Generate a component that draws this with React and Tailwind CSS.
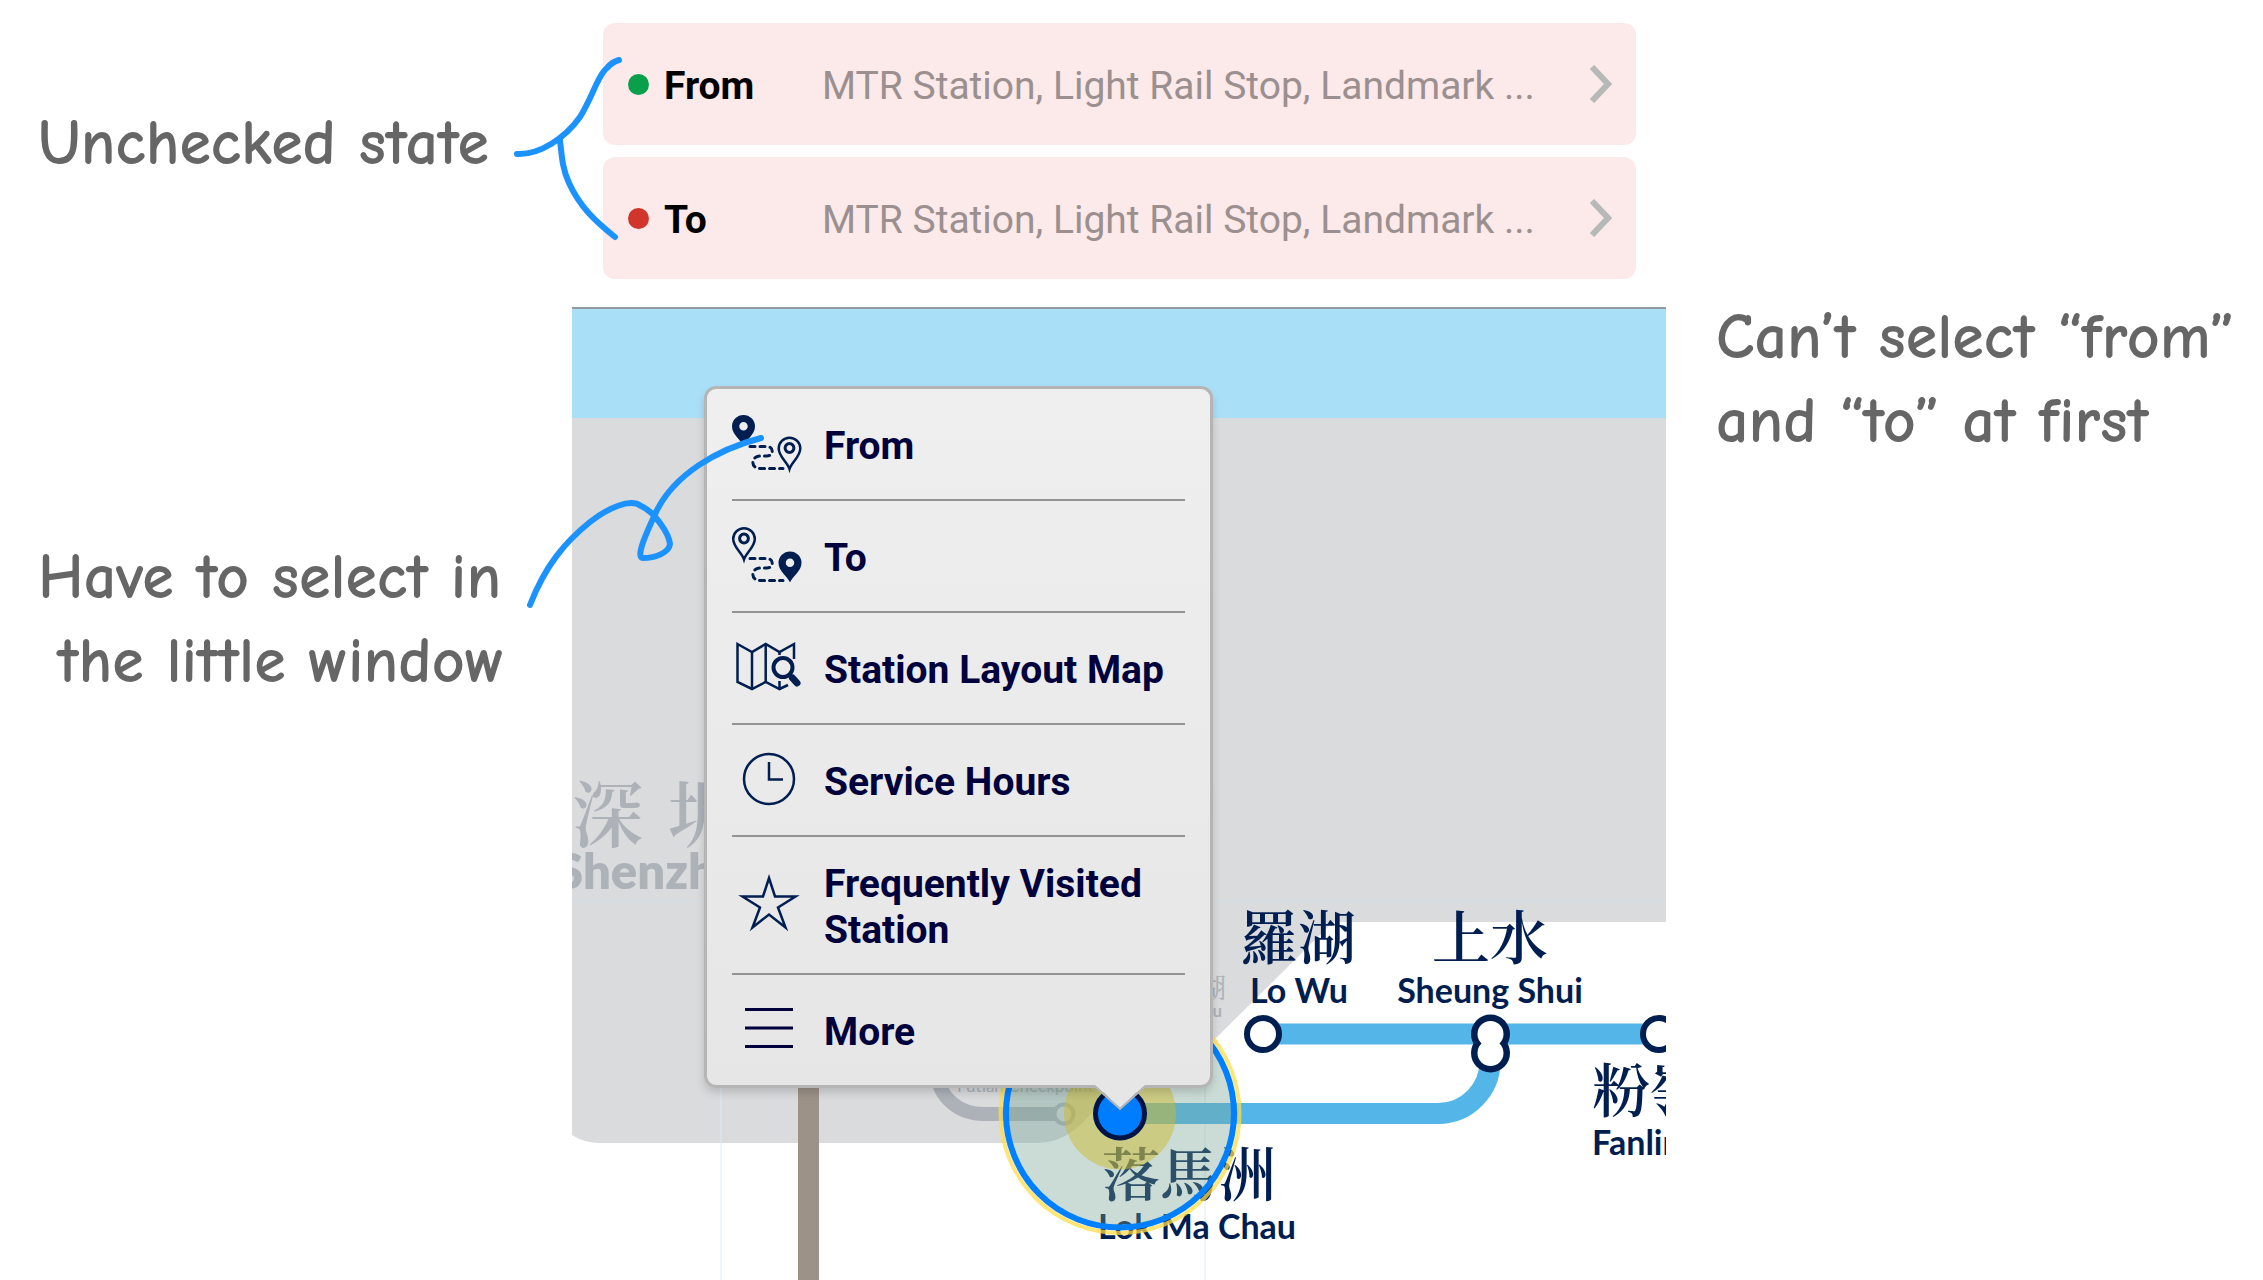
const navy = "#001e50";

function PinSolid({ x, y }) {
  return (
    <path
      transform={`translate(${x} ${y})`}
      fill={navy}
      fillRule="evenodd"
      d="M0 19.500C-2 14-11.500 8-11.500 0A11.500 11.500 0 0 1 11.500 0C11.500 8 2 14 0 19.500ZM0-4.500A4.200 4.200 0 1 0 0 4A4.200 4.200 0 1 0 0-4.500Z"
    />
  );
}

function PinOutline({ x, y }) {
  return (
    <g transform={`translate(${x} ${y})`} fill="none" stroke={navy} strokeWidth="2.500">
      <path d="M0 20.500C-2 14-10.800 8-10.800 0A10.800 10.800 0 0 1 10.800 0C10.800 8 2 14 0 20.500Z" />
      <circle cy="-0.500" r="4.400" strokeWidth="3" />
    </g>
  );
}

function Route() {
  return (
    <path
      d="M18 32.500H35C42 32.500 42 42 35 42H28C18.500 42.500 18.500 54.500 28 54.500H51"
      fill="none"
      stroke={navy}
      strokeWidth="3"
      strokeLinecap="round"
      strokeDasharray="5 5"
    />
  );
}

function Icon({ children }) {
  return (
    <svg viewBox="0 0 74 60" className="h-[60px] w-[74px] shrink-0 overflow-visible" aria-hidden="true">
      {children}
    </svg>
  );
}

const FromIcon = () => (
  <Icon>
    <PinSolid x={11.5} y={12.5} />
    <PinOutline x={57.5} y={34.5} />
    <Route />
  </Icon>
);

const ToIcon = () => (
  <Icon>
    <PinOutline x={12} y={13} />
    <PinSolid x={58} y={37} />
    <Route />
  </Icon>
);

const LayoutIcon = () => (
  <Icon>
    <g fill="none" stroke={navy} strokeWidth="2.500">
      <path d="M62 21V6L47.500 14L33.700 6L20 14L5.500 6V44L20 51L33.700 44L47.500 51L56 47" />
      <path d="M20 14V51M33.700 6V44M47.500 14V17M47.500 43V51" />
      <circle cx="51" cy="29.500" r="9.500" strokeWidth="4" />
      <path d="M57.500 36.500L61 40.500" strokeWidth="4" />
      <path d="M60.500 40L65 45" strokeWidth="7" strokeLinecap="round" />
    </g>
  </Icon>
);

const ClockIcon = () => (
  <Icon>
    <g fill="none" stroke={navy} strokeWidth="2.500">
      <circle cx="37" cy="29" r="25" />
      <path d="M37 12V29.500H51" />
    </g>
  </Icon>
);

const StarIcon = () => (
  <Icon>
    <path
      d="M37 3L43 21.500H63.500L46 32.500L53.500 52.500L37 39.500L20.500 52.500L28 32.500L10.500 21.500H31Z"
      fill="none"
      stroke={navy}
      strokeWidth="2.500"
    />
  </Icon>
);

const MoreIcon = () => (
  <Icon>
    <path d="M13 9.500H61M13 28H61M13 46.500H61" stroke="#00003c" strokeWidth="3" />
  </Icon>
);

const menu = [
  { label: "From", icon: FromIcon },
  { label: "To", icon: ToIcon },
  { label: "Station Layout Map", icon: LayoutIcon },
  { label: "Service Hours", icon: ClockIcon },
  { label: "Frequently Visited Station", icon: StarIcon },
  { label: "More", icon: MoreIcon },
];

function StationField({ label, dot }) {
  return (
    <button
      type="button"
      className="flex h-[122px] w-full items-center rounded-xl bg-[#fce9e9] pr-6 pl-[25px] text-left text-[39px] leading-[46px]"
    >
      <span className={`size-[21px] shrink-0 rounded-full ${dot}`} />
      <span className="ml-[15px] w-[158px] shrink-0 pt-1 font-bold text-black">{label}</span>
      <span className="min-w-0 grow truncate pt-1 text-[#9b908f]">MTR Station, Light Rail Stop, Landmark ...</span>
      <svg viewBox="0 0 24 38" className="h-[38px] w-6 shrink-0" aria-hidden="true">
        <path d="M4 2L20 19L4 36" fill="none" stroke="#b7b9b8" strokeWidth="6" />
      </svg>
    </button>
  );
}

function StationMenu() {
  return (
    <nav
      aria-label="Station options"
      className="absolute top-[77px] left-[132px] w-[509px] rounded-xl border-3 border-[#b5b5b5] bg-linear-to-b from-[#efefef] to-[#e6e6e6] px-[25px] shadow-[0_5px_8px_rgba(0,0,0,0.15)]"
    >
      <ul className="divide-y-2 divide-[#949494]">
        {menu.map(({ label, icon: Glyph }) => (
          <li key={label}>
            <button
              type="button"
              className="flex min-h-[110px] w-full items-center gap-[18px] py-5 text-left text-[39px] leading-[46px] font-bold text-[#00003c]"
            >
              <Glyph />
              <span className="pt-1">{label}</span>
            </button>
          </li>
        ))}
      </ul>
      <svg viewBox="0 0 52 28" className="absolute top-full left-[387px] h-7 w-[52px]" aria-hidden="true">
        <path d="M1 0L26 23L51 0Z" fill="#e6e6e6" />
        <path d="M1 1.500L26 24L51 1.500" fill="none" stroke="#b5b5b5" strokeWidth="2" />
      </svg>
    </nav>
  );
}

function RailMap() {
  const zh = "font-['Noto_Serif_CJK_TC','Noto_Sans_CJK_TC',serif] font-semibold";
  const en = "font-[Lato,sans-serif] font-bold";
  return (
    <svg viewBox="0 0 1094 971" className="block h-auto w-full" role="img" aria-label="Rail map around Lok Ma Chau">
      <rect width="1094" height="109" fill="#aae0f7" />
      <path d="M0 109H1094V613H761L645 728L535 781Q505 834 465 834H28Q12 834 0 826Z" fill="#dadbdd" />
      <path d="M0 592H1094" stroke="#cfdfe9" strokeWidth="1" />
      <path d="M149 592V971M633 592V971" stroke="#dcecf5" strokeWidth="1" />
      <rect x="226" y="700" width="21" height="271" fill="#9c9288" />

      <g fill="#adb2b9">
        <text x="0 96" y="532" fontSize="72" className={zh}>深圳</text>
        <text x="-16" y="580" fontSize="49" className="font-[Lato,sans-serif] font-extrabold">Shenzhen</text>
        <text x="654" y="689" fontSize="27" textAnchor="end" className="font-['Noto_Serif_CJK_TC','Noto_Sans_CJK_TC',serif]">羅湖</text>
        <text x="650" y="708" fontSize="17" textAnchor="end" className={en}>Lo Wu</text>
        <text x="385" y="783" fontSize="17" className="font-[Lato,sans-serif]">Futian Checkpoint</text>
      </g>
      <path d="M364 760C366 790 388 805 412 805H484" fill="none" stroke="#adb2b9" strokeWidth="14" />
      <circle cx="492" cy="805" r="9.500" fill="#dadbdd" stroke="#adb2b9" strokeWidth="4" />

      <g fill="none" stroke="#54b6e8" strokeWidth="21">
        <path d="M691 725H1094" />
        <path d="M548 804.500H866A52 52 0 0 0 918 752" />
      </g>
      <g fill="#fff" stroke={navy} strokeWidth="6">
        <circle cx="691" cy="725" r="16" />
        <circle cx="1087" cy="725" r="16" />
      </g>
      <g fill={navy}>
        <circle cx="918.500" cy="725" r="19.500" />
        <circle cx="918.500" cy="744" r="19.500" />
      </g>
      <g fill="#fff">
        <circle cx="918.500" cy="725" r="13" />
        <circle cx="918.500" cy="744" r="13" />
      </g>

      <g fill={navy}>
        <g fontSize="58" className={zh}>
          <text x="726" y="650" textAnchor="middle">羅湖</text>
          <text x="918" y="650" textAnchor="middle">上水</text>
          <text x="617" y="887" textAnchor="middle">落馬洲</text>
          <text x="1020" y="803">粉嶺</text>
        </g>
        <g fontSize="34" className={en}>
          <text x="727" y="694" textAnchor="middle">Lo Wu</text>
          <text x="918" y="694" textAnchor="middle">Sheung Shui</text>
          <text x="625" y="930" textAnchor="middle">Lok Ma Chau</text>
          <text x="1020" y="846">Fanling</text>
        </g>
      </g>

      <circle cx="548" cy="804.500" r="119.500" fill="none" stroke="#ffdc46" strokeOpacity="0.750" strokeWidth="4" />
      <circle cx="548" cy="804.500" r="113" fill="#76a393" fillOpacity="0.380" />
      <circle cx="548" cy="804.500" r="114" fill="none" stroke="#0080ff" strokeWidth="6" />
      <circle cx="548" cy="804.500" r="56" fill="#cdba30" fillOpacity="0.500" />
      <circle cx="548" cy="804.500" r="24.500" fill="#007dff" stroke="#001446" strokeWidth="5" />
    </svg>
  );
}

export default function App() {
  const note =
    "font-['Comic_Sans_MS','Comic_Neue',cursive] font-bold text-[64px] leading-[84px] text-[#666] whitespace-pre [font-variant-ligatures:none]";
  return (
    <main className="relative grid grid-cols-[572fr_1094fr_597fr] overflow-hidden bg-white font-[Roboto,sans-serif]">
      <aside className="min-w-0 pt-[101px] pl-[38px]">
        <p className={note}>Unchecked state</p>
        <p className={`mt-[350px] w-fit text-center ${note}`}>{"Have to select in \nthe little window"}</p>
      </aside>

      <section className="min-w-0">
        <div className="flex flex-col gap-3 pt-[23px] pr-[30px] pb-7 pl-[31px]">
          <StationField label="From" dot="bg-[#0a9f4b]" />
          <StationField label="To" dot="bg-[#d2352b]" />
        </div>
        <div className="relative border-t-2 border-[#949a9d]">
          <RailMap />
          <StationMenu />
        </div>
      </section>

      <aside className="min-w-0 pt-[295px] pl-[50px]">
        <p className={note}>{"Can’t select “from”\nand “to” at first"}</p>
      </aside>

      <svg viewBox="0 0 2263 1280" className="pointer-events-none absolute inset-x-0 top-0 w-full" aria-hidden="true">
        <g fill="none" stroke="#1c92ff" strokeWidth="6" strokeLinecap="round" strokeLinejoin="round">
          <path d="M517 154C540 155 565 138 580 117C592 98 598 75 607 68Q612 62 619 60" />
          <path d="M560 140C562 160 563 170 569 183C580 207 595 221 615 237" />
          <path d="M530 605C545 566 565 542 590 522C608 508 630 498 641 506C655 512 669 534 670 544C669 553 655 558 643 558C634 558 650 525 657 510C675 475 715 450 761 438" />
        </g>
      </svg>
    </main>
  );
}
